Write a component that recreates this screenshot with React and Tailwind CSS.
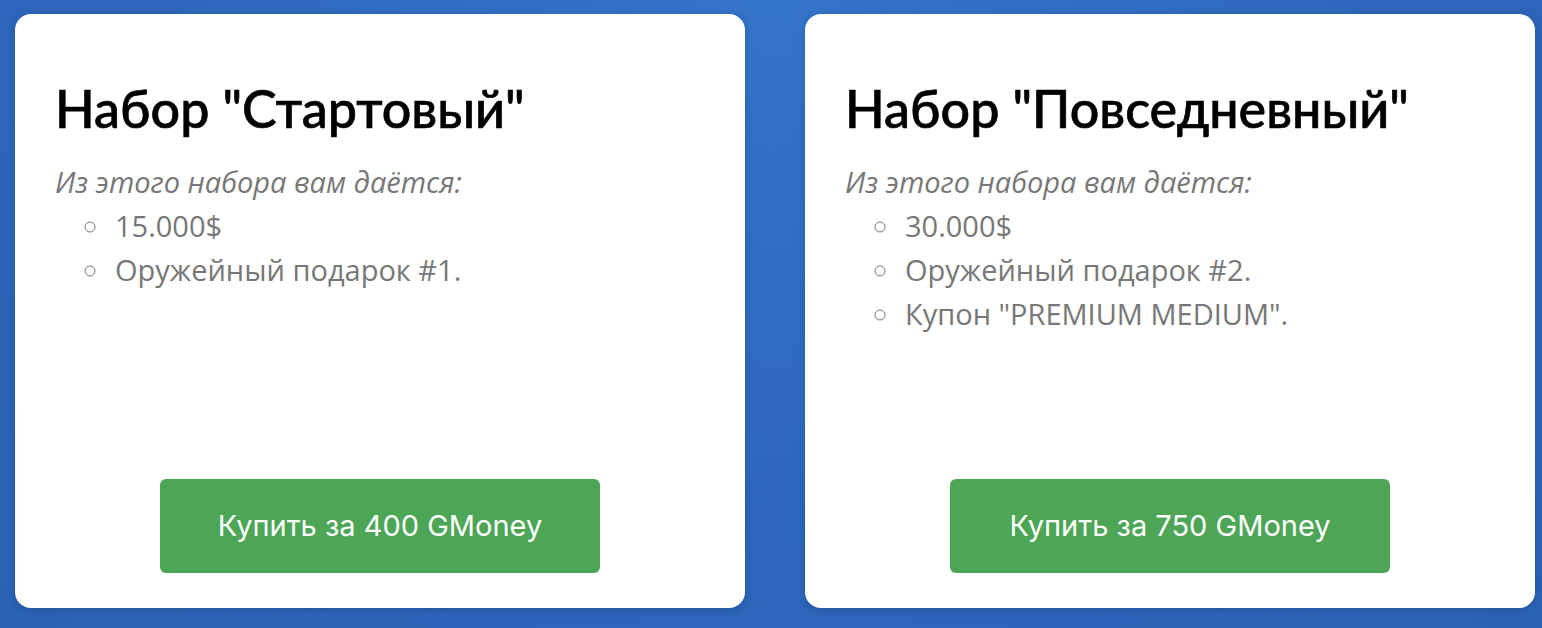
const packs = [
    {
        title: 'Набор "Стартовый"',
        items: ['15.000$', 'Оружейный подарок #1.'],
        price: 400,
    },
    {
        title: 'Набор "Повседневный"',
        items: ['30.000$', 'Оружейный подарок #2.', 'Купон "PREMIUM MEDIUM".'],
        price: 750,
    },
]

function PackCard({ pack }) {
    return (
        <div className="flex h-[594px] w-[730px] shrink-0 flex-col rounded-2xl bg-white px-10 pb-[35px] shadow-[0_2px_8px_rgba(0,0,0,0.15)]">
            <h2 className="mt-[64px] font-['Lato',sans-serif] text-[52px] font-medium leading-[60px] text-black [-webkit-text-stroke:0.7px_black]">
                {pack.title}
            </h2>
            <p className="mt-[22px] font-['Open_Sans',sans-serif] text-[29px] italic leading-[44px] text-[#777]">
                Из этого набора вам даётся:
            </p>
            <ul className="list-[circle] pl-[57px] font-['Open_Sans',sans-serif] text-[29px] leading-[44px] text-[#777]">
                {pack.items.map((item) => (
                    <li key={item} className="pl-[3px]">
                        {item}
                    </li>
                ))}
            </ul>
            <button className="mx-auto mt-auto h-[94px] w-[440px] rounded-md bg-[#4ca656] font-['Inter',sans-serif] text-[29px] text-white">
                Купить за {pack.price} GMoney
            </button>
        </div>
    )
}

export default function App() {
    return (
        <div className="flex h-[628px] w-[1542px] gap-[60px] overflow-hidden bg-[radial-gradient(ellipse_at_50%_0%,#3474c9,#2d66bb_60%,#2b62b5)] px-[15px] pt-[14px]">
            {packs.map((pack) => (
                <PackCard key={pack.title} pack={pack} />
            ))}
        </div>
    )
}
